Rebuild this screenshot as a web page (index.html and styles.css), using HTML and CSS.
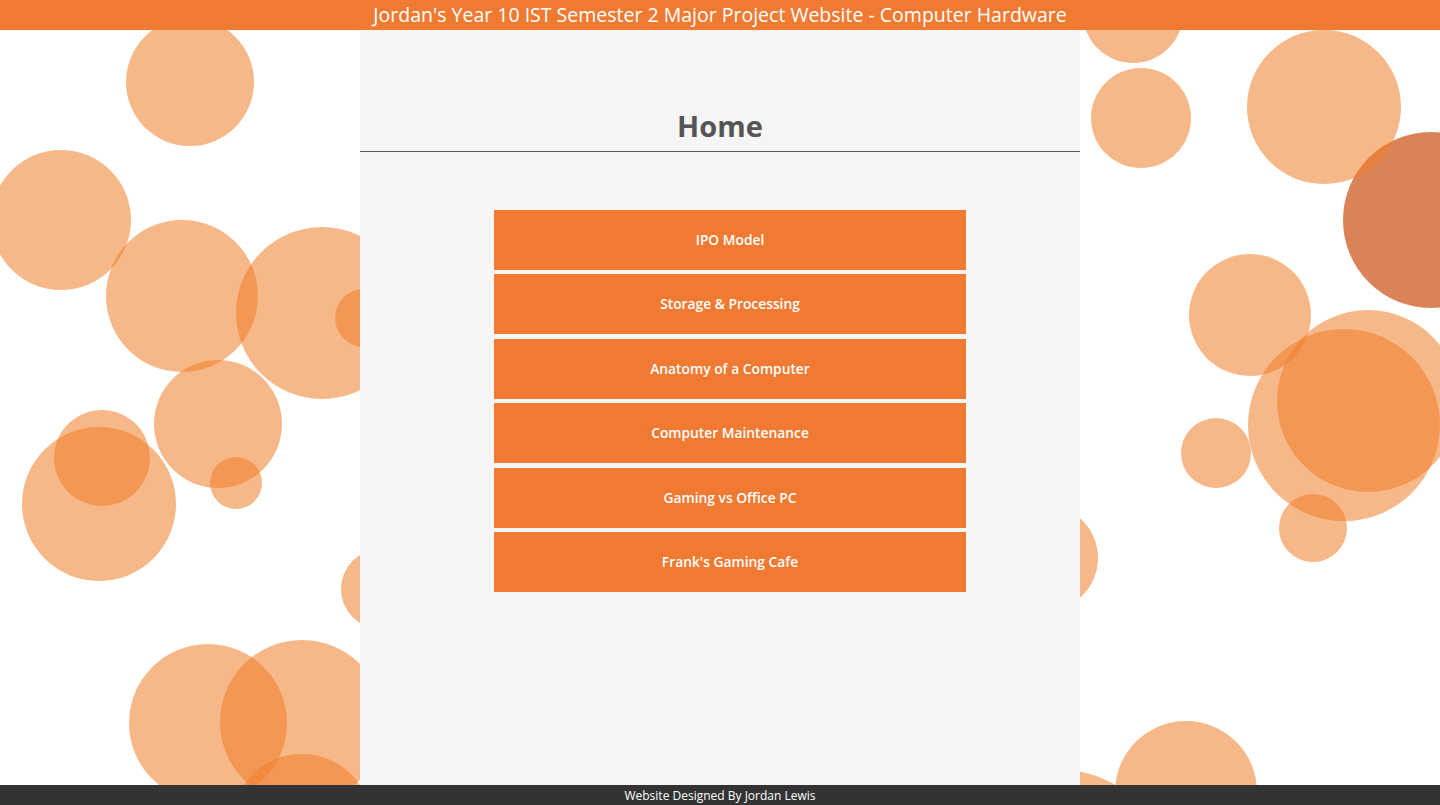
FILE: index.html
```html
<!DOCTYPE html>
<html lang="en">
<head>
<meta charset="utf-8">
<title>Home - Computer Hardware</title>
<link rel="stylesheet" href="styles.css">
</head>
<body>
<div class="bubbles" aria-hidden="true">
  <span class="bubble dark c4"></span>
  <span class="bubble b1"></span>
  <span class="bubble b2"></span>
  <span class="bubble b3"></span>
  <span class="bubble b4"></span>
  <span class="bubble b5"></span>
  <span class="bubble b6"></span>
  <span class="bubble b7"></span>
  <span class="bubble b8"></span>
  <span class="bubble b9"></span>
  <span class="bubble b10"></span>
  <span class="bubble b11"></span>
  <span class="bubble b12"></span>
  <span class="bubble b13"></span>
  <span class="bubble c1"></span>
  <span class="bubble c2"></span>
  <span class="bubble c3"></span>
  <span class="bubble c5"></span>
  <span class="bubble c6"></span>
  <span class="bubble c7"></span>
  <span class="bubble c8"></span>
  <span class="bubble c9"></span>
  <span class="bubble c10"></span>
  <span class="bubble c11"></span>
  <span class="bubble c12"></span>
</div>
<div class="page">
  <header class="topbar">Jordan's Year 10 IST Semester 2 Major Project Website - Computer Hardware</header>
  <main class="column">
    <h1 class="title">Home</h1>
    <nav class="menu">
      <a class="menu-item" href="#">IPO Model</a>
      <a class="menu-item" href="#">Storage &amp; Processing</a>
      <a class="menu-item" href="#">Anatomy of a Computer</a>
      <a class="menu-item" href="#">Computer Maintenance</a>
      <a class="menu-item" href="#">Gaming vs Office PC</a>
      <a class="menu-item" href="#">Frank's Gaming Cafe</a>
    </nav>
  </main>
  <footer class="footer">Website Designed By Jordan Lewis</footer>
</div>
</body>
</html>
```

FILE: styles.css
```css
* { box-sizing: border-box; }

html, body {
  margin: 0;
  padding: 0;
  height: 100%;
}

body {
  font-family: "Open Sans", "Liberation Sans", sans-serif;
  background: #ffffff;
  overflow: hidden;
  position: relative;
}

.bubbles {
  position: absolute;
  inset: 0;
  overflow: hidden;
  z-index: 0;
}

.bubble {
  position: absolute;
  border-radius: 50%;
  background: rgba(240, 125, 40, 0.55);
}

.bubble.dark { background: rgba(206, 96, 38, 0.78); }

.b1 { left: 126px; top: 18px; width: 128px; height: 128px; }
.b2 { left: -9px; top: 150px; width: 140px; height: 140px; }
.b3 { left: 106px; top: 220px; width: 152px; height: 152px; }
.b4 { left: 236px; top: 227px; width: 172px; height: 172px; }
.b5 { left: 335px; top: 289px; width: 58px; height: 58px; }
.b6 { left: 154px; top: 360px; width: 128px; height: 128px; }
.b7 { left: 210px; top: 457px; width: 52px; height: 52px; }
.b8 { left: 54px; top: 410px; width: 96px; height: 96px; }
.b9 { left: 22px; top: 427px; width: 154px; height: 154px; }
.b10 { left: 341px; top: 549px; width: 80px; height: 80px; }
.b11 { left: 129px; top: 644px; width: 158px; height: 158px; }
.b12 { left: 220px; top: 640px; width: 164px; height: 164px; }
.b13 { left: 232px; top: 754px; width: 140px; height: 140px; }

.c1 { left: 1083px; top: -37px; width: 100px; height: 100px; }
.c2 { left: 1091px; top: 68px; width: 100px; height: 100px; }
.c3 { left: 1247px; top: 30px; width: 154px; height: 154px; }
.c4 { left: 1343px; top: 132px; width: 176px; height: 176px; }
.c5 { left: 1189px; top: 254px; width: 122px; height: 122px; }
.c6 { left: 1248px; top: 329px; width: 192px; height: 192px; }
.c7 { left: 1277px; top: 310px; width: 182px; height: 182px; }
.c8 { left: 1181px; top: 418px; width: 70px; height: 70px; }
.c9 { left: 1279px; top: 494px; width: 68px; height: 68px; }
.c10 { left: 992px; top: 505px; width: 106px; height: 106px; }
.c11 { left: 1115px; top: 721px; width: 142px; height: 142px; }
.c12 { left: 950px; top: 770px; width: 220px; height: 220px; }

.page {
  position: relative;
  z-index: 1;
  height: 100%;
  display: flex;
  flex-direction: column;
}

.topbar {
  flex: 0 0 30px;
  height: 30px;
  background: #f07a32;
  color: #ffffff;
  font-size: 19.5px;
  line-height: 29px;
  text-align: center;
  white-space: nowrap;
}

.column {
  flex: 1 1 auto;
  width: 720px;
  margin: 0 auto;
  background: #f5f5f5;
  padding-top: 76px;
  display: flex;
  flex-direction: column;
}

.title {
  margin: 0;
  font-size: 29px;
  font-weight: 700;
  color: #555555;
  text-align: center;
  line-height: 40px;
  padding-bottom: 5px;
  border-bottom: 1px solid #555555;
}

.menu {
  margin-top: 58px;
  padding-left: 20px;
  display: flex;
  flex-direction: column;
  align-items: center;
  gap: 4.4px;
}

.menu-item {
  display: flex;
  align-items: center;
  justify-content: center;
  width: 472px;
  height: 60px;
  padding-bottom: 1px;
  background: #f07a32;
  color: #ffffff;
  font-size: 13.8px;
  font-weight: 600;
  text-decoration: none;
}

.footer {
  flex: 0 0 20px;
  height: 20px;
  background: #333333;
  color: #ffffff;
  font-size: 12px;
  line-height: 22px;
  text-align: center;
  overflow: hidden;
}
```
